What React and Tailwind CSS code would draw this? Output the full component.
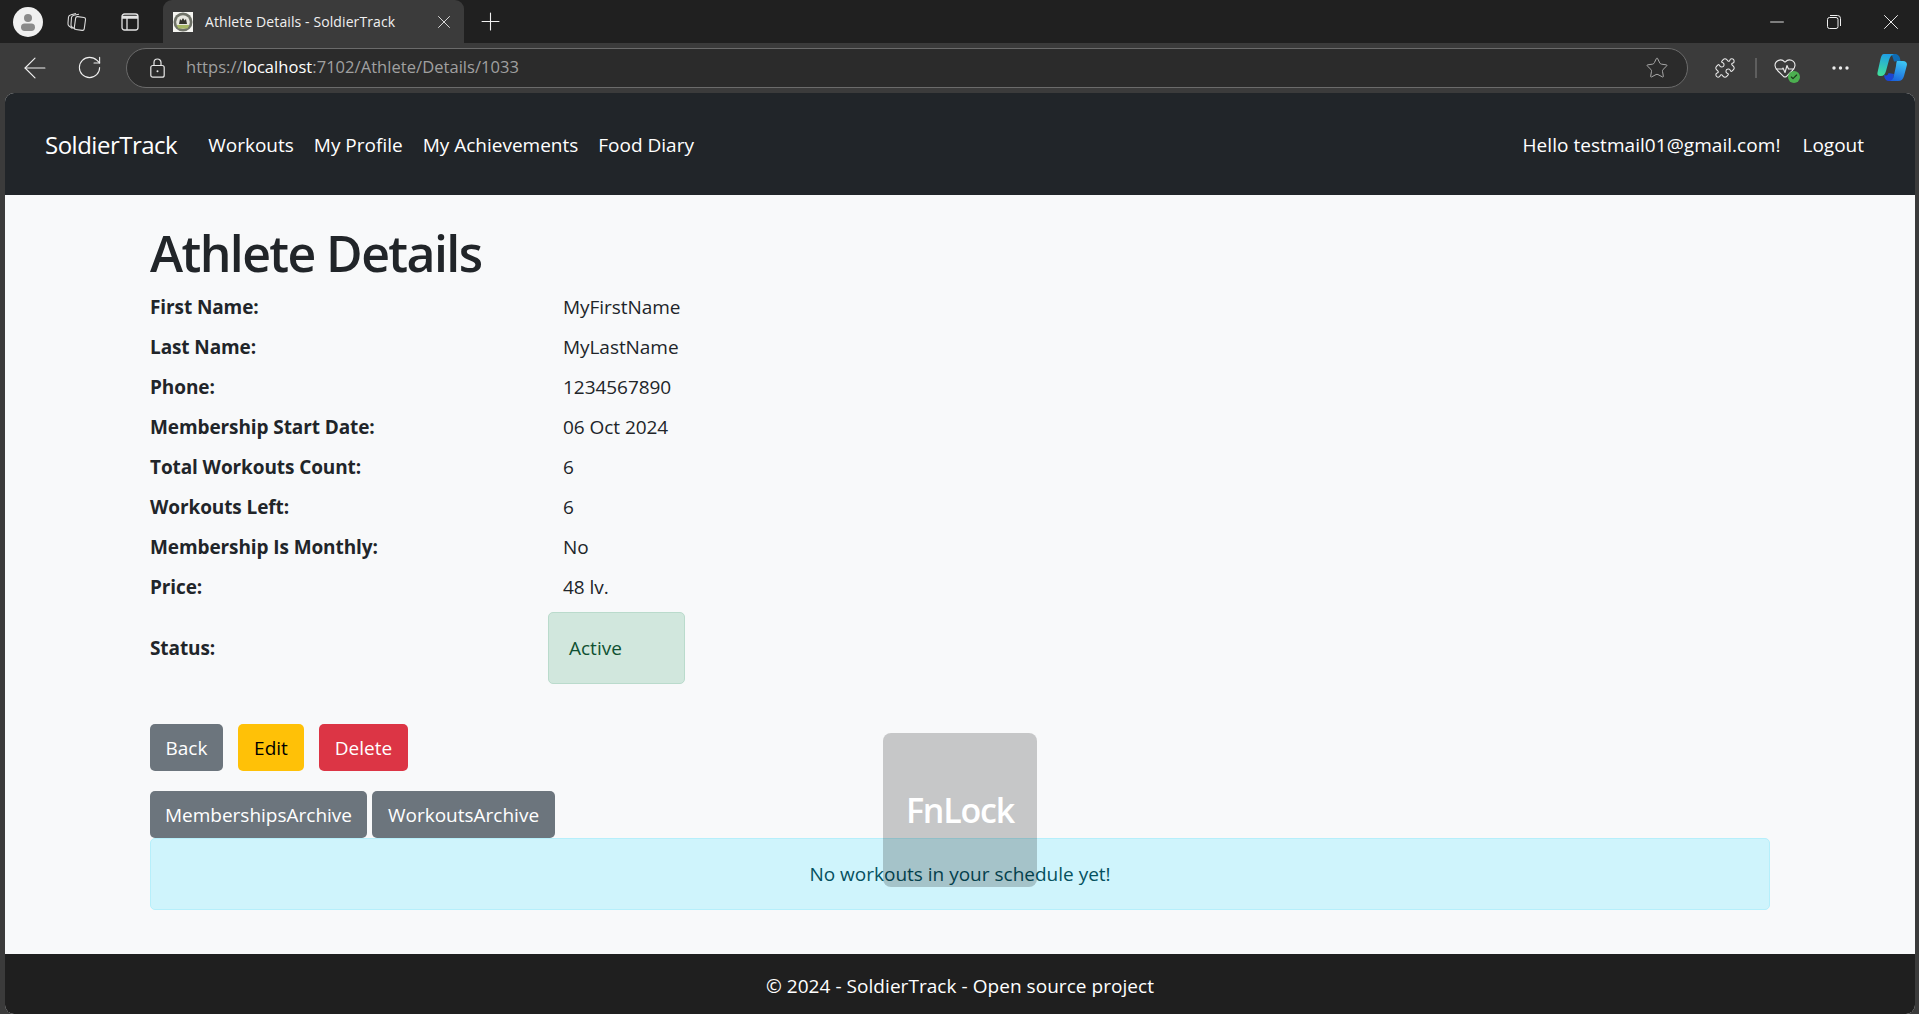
// App.jsx
import React from "react";
import { ArrowLeft, RotateCw, Star, Puzzle, HeartPulse, Minus, X, Plus, Check } from "lucide-react";

const details = [
  ["First Name:", "MyFirstName"],
  ["Last Name:", "MyLastName"],
  ["Phone:", "1234567890"],
  ["Membership Start Date:", "06 Oct 2024"],
  ["Total Workouts Count:", "6"],
  ["Workouts Left:", "6"],
  ["Membership Is Monthly:", "No"],
  ["Price:", "48 lv."],
];

const navLinks = ["Workouts", "My Profile", "My Achievements", "Food Diary"];

function Favicon() {
  return (
    <svg width="20" height="20" viewBox="0 0 20 20">
      <rect width="20" height="20" fill="#f6f6f2" />
      <circle cx="10" cy="10" r="9.500" fill="#6f7268" />
      <circle cx="10" cy="10" r="6.800" fill="#e6e6de" />
      <path d="M6 12l1-5 1.500 1.500L10 6l1.500 2.500L13 7l1 5z" fill="#33332e" />
      <path d="M3.500 13h13l-2 3.500h-9z" fill="#a6b765" />
    </svg>
  );
}

function Copilot() {
  return (
    <svg width="30" height="27" viewBox="0 0 30 27">
      <defs>
        <linearGradient id="cpA" x1="0.5" y1="0" x2="0.3" y2="1">
          <stop offset="0" stopColor="#1f9fe6" />
          <stop offset="1" stopColor="#41e09a" />
        </linearGradient>
        <linearGradient id="cpB" x1="0.6" y1="0" x2="0.3" y2="1">
          <stop offset="0" stopColor="#3cc4f2" />
          <stop offset="1" stopColor="#1a66de" />
        </linearGradient>
      </defs>
      <path d="M14 0h4c3 0 5 2 5.500 7L17 7.500C16 4 15 1 14 0z" fill="#0f6cb4" />
      <path d="M7 21c3 1 4 0 4.500-2l5.500 1-1 7h-4c-3 0-4.500-2-5-6z" fill="#1c46d4" />
      <path d="M7 0h10c-3 1-4 3-5 6L9 17c-.7 3-2.500 5-5 5H3c-2 0-3-1.500-2.500-3.500L3.500 5C4.200 2 5 0 7 0z" fill="url(#cpA)" />
      <path d="M20 7h6c3 0 4.500 2 3.800 4.500L27 22c-.8 3-2.500 5-6 5h-8c2.500-.5 3.500-3 4-6l2-9c.2-2 .3-4 1-5z" fill="url(#cpB)" />
    </svg>
  );
}

function Chrome() {
  return (
    <>
      <div className="flex h-[43px] items-end bg-[#202020] text-white">
        <div className="flex h-[43px] w-[163px] items-center pl-[13px]">
          <div className="flex h-[30px] w-[30px] items-center justify-center rounded-full bg-[#f0f0f0]">
            <svg width="20" height="20" viewBox="0 0 20 20" fill="#8a8a8a">
              <circle cx="10" cy="6" r="4" />
              <rect x="3" y="11.500" width="14" height="7.500" rx="3.700" />
            </svg>
          </div>
          <svg className="ml-[24px]" width="20" height="20" viewBox="0 0 20 20" fill="none" stroke="#dcdcdc" strokeWidth="1.100">
            <rect x="8" y="5" width="10" height="13" rx="1.800" transform="rotate(8 13 11)" />
            <path d="M5.500 16.500L2 14c-1-.8-1.200-1.500-1-3l.5-6c.2-1.500 1-2 2.500-2.300L9 1.500" />
            <path d="M8 17L5 15c-1-.7-1.200-1.400-1-2.500l.5-7c.2-1.500 1-2 2.300-2.300l5.200-1" />
          </svg>
          <svg className="ml-[34px]" width="18" height="18" viewBox="0 0 18 18" fill="none" stroke="#e4e4e4" strokeWidth="1.300">
            <rect x="1" y="1" width="16" height="16" rx="2.500" />
            <path d="M1 3.500h16M1 5h16M6 4.500V17" />
          </svg>
        </div>
        <div className="flex h-[43px] w-[301px] items-center rounded-t-[9px] bg-[#3b3b3b] pl-[10px]">
          <Favicon />
          <span className="ml-[12px] font-['Open_Sans',sans-serif] text-[14px] tracking-[0.1px] text-[#f0f0f0]">Athlete Details - SoldierTrack</span>
          <X className="ml-auto mr-[9px]" size={22} strokeWidth={1} color="#e8e8e8" />
        </div>
        <div className="flex h-[43px] w-[52px] items-center justify-center">
          <Plus size={29} strokeWidth={0.900} color="#f0f0f0" />
        </div>
        <div className="ml-auto flex h-[43px] items-center">
          <div className="flex w-[57px] justify-center"><Minus size={22} strokeWidth={1} color="#f0f0f0" /></div>
          <div className="flex w-[57px] justify-center">
            <svg width="14" height="14" viewBox="0 0 14 14" fill="none" stroke="#f0f0f0" strokeWidth="1">
              <rect x="0.500" y="2.500" width="10.500" height="11" rx="2" />
              <path d="M3 .5h7.500a3 3 0 0 1 3 3V11" />
            </svg>
          </div>
          <div className="flex w-[57px] justify-center"><X size={26} strokeWidth={0.900} color="#f0f0f0" /></div>
        </div>
      </div>
      <div className="flex h-[50px] items-center bg-[#3b3b3b] pb-[1px]">
        <div className="flex w-[126px] items-center">
          <ArrowLeft className="ml-[18px]" size={34} strokeWidth={0.800} color="#f0f0f0" />
          <RotateCw className="ml-[24px]" size={27} strokeWidth={0.950} color="#f0f0f0" />
        </div>
        <div className="flex h-[40px] w-[1562px] items-center rounded-full border border-[#6b6b6b] bg-[#2b2b2b] pl-[23px] pr-[18px] font-['Open_Sans',sans-serif] text-[16.500px] tracking-[0.05px] text-[#a0a0a0]">
          <svg width="15" height="20" viewBox="0 0 15 20" fill="none" stroke="#e8e8e8" strokeWidth="1.200">
            <rect x="0.800" y="7.500" width="13.400" height="11.700" rx="2" />
            <path d="M4 7.500V4.500a3.500 3.500 0 0 1 7 0v3" />
            <circle cx="7.500" cy="13.300" r="1" fill="#e8e8e8" stroke="none" />
          </svg>
          <span className="ml-[21px]">https://<span className="text-white">localhost</span>:7102/Athlete/Details/1033</span>
          <Star className="ml-auto" size={24} strokeWidth={1} color="#a8a8a8" />
        </div>
        <div className="flex flex-1 items-center">
          <Puzzle className="ml-[26px]" size={22} strokeWidth={1.150} color="#ececec" />
          <div className="ml-[19px] h-[20px] w-[2px] bg-[#5e5e5e]" />
          <div className="relative ml-[16px]">
            <HeartPulse size={24} strokeWidth={1.100} color="#ececec" />
            <div className="absolute -bottom-[3px] -right-[3px] flex h-[12px] w-[12px] items-center justify-center rounded-full bg-[#4caf50]">
              <Check size={8} strokeWidth={3.500} color="#1c3a1c" />
            </div>
          </div>
          <svg className="ml-[35px]" width="17" height="4" viewBox="0 0 17 4" fill="#ececec">
            <circle cx="2" cy="2" r="1.700" />
            <circle cx="8.500" cy="2" r="1.700" />
            <circle cx="15" cy="2" r="1.700" />
          </svg>
          <div className="ml-[28px]"><Copilot /></div>
        </div>
      </div>
    </>
  );
}

export default function App() {
  return (
    <div className="flex h-[1014px] w-[1919px] flex-col overflow-hidden bg-[#3b3b3b] font-['Open_Sans',sans-serif] text-[19px] text-[#212529]">
      <Chrome />

      <div className="relative ml-[5px] mr-[4px] flex flex-1 flex-col overflow-hidden rounded-[9px] bg-[#f8f9fa]">
        <nav className="flex h-[102px] items-center bg-[#212529] pl-[40px] pr-[51px] pt-[2px] text-white">
          <span className="mr-[31px] text-[24px] tracking-[-0.5px]">SoldierTrack</span>
          <div className="flex gap-[20px]">
            {navLinks.map((l) => <span key={l}>{l}</span>)}
          </div>
          <span className="ml-auto tracking-[0.05px]">Hello testmail01@gmail.com!</span>
          <span className="ml-[22px]">Logout</span>
        </nav>

        <main className="flex-1 px-[145px] pt-[28px]">
          <h1 className="mb-[4px] h-[60px] text-[50px] leading-[60px] font-semibold tracking-[-1.6px]">Athlete Details</h1>

          {details.map(([label, value]) => (
            <div key={label} className="flex h-[40px] items-center">
              <span className="w-[413px] font-bold tracking-[-0.1px]">{label}</span>
              <span className="tracking-[-0.05px]">{value}</span>
            </div>
          ))}

          <div className="mt-[5px] flex h-[72px] items-center">
            <span className="w-[398px] font-bold tracking-[-0.1px]">Status:</span>
            <div className="flex h-[72px] w-[137px] items-center rounded-[5px] border border-[#badbcc] bg-[#d1e7dd] pl-[20px] pt-[1px] text-[#0f5132]">Active</div>
          </div>

          <div className="mt-[40px] flex gap-[15px]">
            <button className="h-[47px] w-[73px] rounded-[5px] bg-[#6c757d] pt-[1px] text-white">Back</button>
            <button className="h-[47px] w-[66px] rounded-[5px] bg-[#ffc107] pt-[1px] text-black">Edit</button>
            <button className="h-[47px] w-[89px] rounded-[5px] bg-[#dc3545] pt-[1px] text-white">Delete</button>
          </div>

          <div className="mt-[20px] flex gap-[5px]">
            <button className="h-[47px] w-[217px] rounded-[5px] bg-[#6c757d] pt-[1px] text-white">MembershipsArchive</button>
            <button className="h-[47px] w-[183px] rounded-[5px] bg-[#6c757d] pt-[1px] text-white">WorkoutsArchive</button>
          </div>

          <div className="flex h-[72px] items-center justify-center rounded-[5px] border border-[#b6effb] bg-[#cff4fc] pt-[1px] text-[#055160]">
            No workouts in your schedule yet!
          </div>
        </main>

        <footer className="flex h-[60px] items-center justify-center bg-[#1f1f1f] pt-[4px] tracking-[0.05px] text-white">
          © 2024 - SoldierTrack - Open source project
        </footer>

        <div className="absolute left-[878px] top-[640px] flex h-[154px] w-[154px] items-center justify-center rounded-[8px] bg-black/20 text-[34px] font-semibold tracking-[-1.2px] text-white">
          FnLock
        </div>
      </div>
    </div>
  );
}
